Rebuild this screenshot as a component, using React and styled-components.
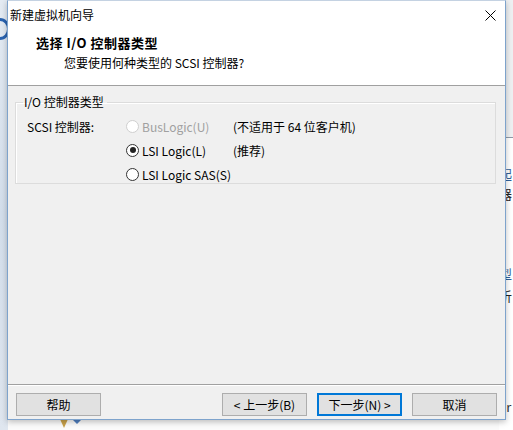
import React from 'react'
import styled, { createGlobalStyle } from 'styled-components'

const GlobalStyle = createGlobalStyle`
    html, body {
        margin: 0;
        padding: 0;
        background: #ffffff;
    }
    body {
        font-family: "Noto Sans CJK SC", "Liberation Sans", sans-serif;
        font-size: 12px;
        color: #000;
    }
`

function Radio({ checked, disabled, children }) {
    return (
        <RadioLabel disabled={disabled}>
            <RadioCircle checked={checked} disabled={disabled} />
            {children}
        </RadioLabel>
    )
}

function App() {
    return (
        <Desktop>
            <GlobalStyle />
            <LeftStrip>
                <BlueArc />
            </LeftStrip>
            <RightStrip>
                <StripTop />
                <StripText top={166} color="#2f5f98">起</StripText>
                <StripText top={186} color="#222">器</StripText>
                <StripText top={266} color="#2f5f98">型</StripText>
                <StripText top={288} color="#222">析</StripText>
                <StripText top={399} color="#333">ar</StripText>
            </RightStrip>
            <BottomIcon>
                <svg width="40" height="12" viewBox="0 0 40 12">
                    <path d="M2 0 L10 0 L6 9 Z" fill="#c9a24a" />
                    <path d="M14 0 L24 0 L19 5 Z" fill="#4f7fc0" />
                </svg>
            </BottomIcon>
            <Window>
                <Header>
                    <TitleBar>
                        <Title>新建虚拟机向导</Title>
                        <CloseButton>
                            <svg width="11" height="11" viewBox="0 0 11 11">
                                <path d="M0.5 0.5 L10.5 10.5 M10.5 0.5 L0.5 10.5" stroke="#000" strokeWidth="1" />
                            </svg>
                        </CloseButton>
                    </TitleBar>
                    <HeaderTitle>选择 I/O 控制器类型</HeaderTitle>
                    <HeaderSub>您要使用何种类型的 SCSI 控制器?</HeaderSub>
                </Header>
                <Body>
                    <Group>
                        <Legend>I/O 控制器类型</Legend>
                        <Options>
                            <FieldLabel>SCSI 控制器:</FieldLabel>
                            <Radio disabled>BusLogic(U)</Radio>
                            <Note>(不适用于 64 位客户机)</Note>

                            <span />
                            <Radio checked>LSI Logic(L)</Radio>
                            <Note>(推荐)</Note>

                            <span />
                            <Radio>LSI Logic SAS(S)</Radio>
                            <span />
                        </Options>
                    </Group>
                </Body>
                <Footer>
                    <Button>帮助</Button>
                    <Spacer />
                    <Button>&lt; 上一步(B)</Button>
                    <Button primary>下一步(N) &gt;</Button>
                    <Button>取消</Button>
                </Footer>
            </Window>
        </Desktop>
    )
}

const Desktop = styled.div`
    position: relative;
    width: 513px;
    height: 430px;
    overflow: hidden;
    background: #fbfbfb;
`

const LeftStrip = styled.div`
    position: absolute;
    left: 0;
    top: 0;
    width: 8px;
    height: 430px;
    background: linear-gradient(180deg, #e4ebf3 0%, #d3deeb 50%, #dfe6ef 100%);
`

const BlueArc = styled.div`
    position: absolute;
    left: -10px;
    top: 18px;
    width: 14px;
    height: 16px;
    border: 3px solid #2a63b0;
    border-radius: 50%;
`

const RightStrip = styled.div`
    position: absolute;
    right: 0;
    top: 0;
    width: 14px;
    height: 430px;
    background: #ffffff;
`

const StripTop = styled.div`
    height: 137px;
    background: #eef0f2;
    border-bottom: 1px solid #8f9aa8;
`

const StripText = styled.span`
    position: absolute;
    left: 0;
    top: ${p => p.top}px;
    font-size: 13px;
    line-height: 16px;
    white-space: nowrap;
    color: ${p => p.color};
`

const BottomIcon = styled.div`
    position: absolute;
    left: 58px;
    top: 419px;
    display: flex;
`

const Window = styled.div`
    position: absolute;
    left: 7px;
    top: 0;
    width: 497px;
    height: 418px;
    display: flex;
    flex-direction: column;
    border: 1px solid #7ea3cc;
    border-top-color: #c4d2e2;
    background: #f0f0f0;
    box-shadow: 0 2px 6px rgba(0, 0, 0, 0.25);
`

const Header = styled.div`
    height: 84px;
    flex-shrink: 0;
    background: #ffffff;
    border-bottom: 1px solid #a0a0a0;
    display: flex;
    flex-direction: column;
`

const TitleBar = styled.div`
    height: 30px;
    display: flex;
    align-items: center;
    justify-content: space-between;
    padding: 0 9px 0 2px;
`

const Title = styled.span`
    font-size: 12px;
    line-height: 16px;
    margin-top: -2px;
`

const CloseButton = styled.span`
    display: flex;
    width: 11px;
    height: 11px;
    margin-top: -2px;
`

const HeaderTitle = styled.div`
    padding-left: 28px;
    margin-top: 3px;
    font-weight: bold;
    font-size: 13px;
    line-height: 18px;
    letter-spacing: 0.5px;
`

const HeaderSub = styled.div`
    padding-left: 56px;
    margin-top: 2px;
    font-size: 12px;
    line-height: 17px;
`

const Body = styled.div`
    flex: 1;
    padding: 9px 9px 0 7px;
    border-bottom: 1px solid #a0a0a0;
    box-shadow: 0 1px 0 #ffffff;
`

const Group = styled.fieldset`
    margin: 0;
    padding: 3px 0 9px 11px;
    height: 89px;
    box-sizing: border-box;
    border: 1px solid #dcdcdc;
    box-shadow: inset 1px 1px 0 #ffffff;
    border-radius: 0;
`

const Legend = styled.legend`
    padding: 0 3px 0 1px;
    margin-left: -4px;
    font-size: 12px;
    line-height: 14px;
`

const Options = styled.div`
    display: grid;
    grid-template-columns: 99px 107px auto;
    grid-auto-rows: 24px;
    align-items: center;
    margin-top: 2px;
`

const FieldLabel = styled.span`
    font-size: 12px;
`

const Note = styled.span`
    font-size: 12px;
`

const RadioLabel = styled.span`
    display: flex;
    align-items: center;
    gap: 3px;
    font-size: 12px;
    color: ${p => (p.disabled ? '#a0a0a0' : '#000')};
`

const RadioCircle = styled.span`
    position: relative;
    width: 11px;
    height: 11px;
    border-radius: 50%;
    border: 1px solid ${p => (p.disabled ? '#cfcfcf' : '#333333')};
    background: #ffffff;
    flex-shrink: 0;

    &::after {
        content: '';
        display: ${p => (p.checked ? 'block' : 'none')};
        position: absolute;
        left: 2.5px;
        top: 2.5px;
        width: 6px;
        height: 6px;
        border-radius: 50%;
        background: #222222;
    }
`

const Footer = styled.div`
    height: 34px;
    flex-shrink: 0;
    display: flex;
    align-items: flex-start;
    gap: 10px;
    padding: 8px 8px 0 8px;
    box-sizing: border-box;
`

const Spacer = styled.div`
    flex: 1;
`

const Button = styled.button`
    width: 85px;
    height: 23px;
    box-sizing: border-box;
    padding: 0;
    margin: 0;
    font-family: "Noto Sans CJK SC", "Liberation Sans", sans-serif;
    font-size: 12px;
    color: #000;
    background: #e1e1e1;
    border: ${p => (p.primary ? '2px solid #0078d7' : '1px solid #adadad')};
    border-radius: 0;
`

export default App
